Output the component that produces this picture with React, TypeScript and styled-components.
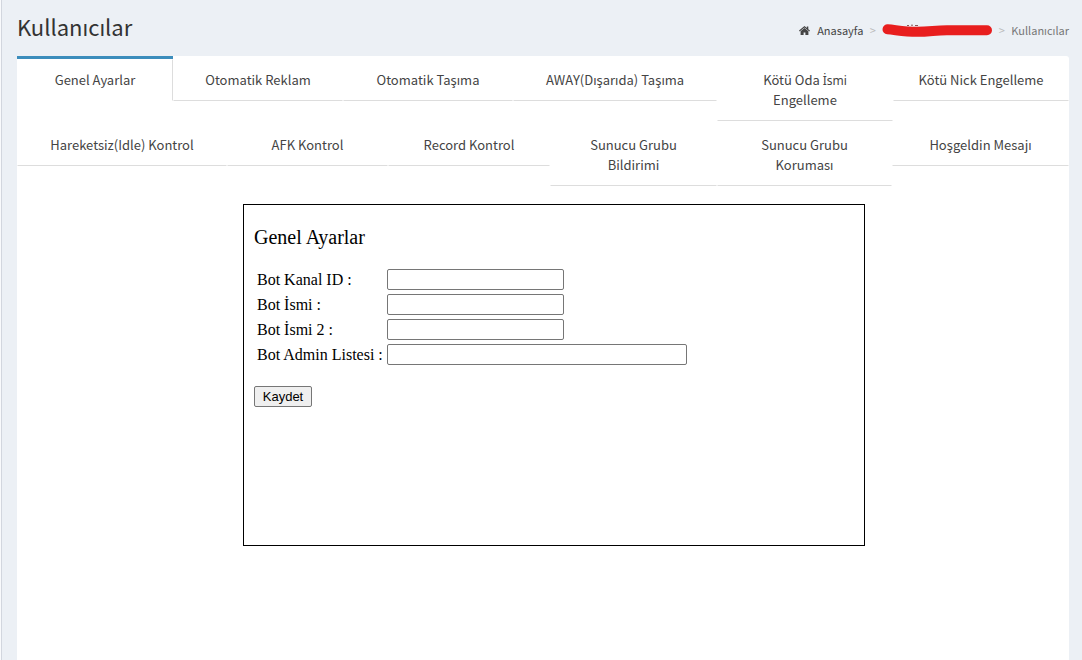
import React from "react";
import styled, { createGlobalStyle } from "styled-components";

const sans = `"Noto Sans CJK SC", "Noto Sans", sans-serif`;

const GlobalStyle = createGlobalStyle`
  *, *::before, *::after { box-sizing: border-box; }
  body { margin: 0; background: #ecf0f5; }
`;

const Page = styled.div`
  display: flex;
  flex-direction: column;
  min-height: 100vh;
  padding: 0 13px 0 15px;
  border-left: 1px solid #d2d6de;
  margin-left: 1px;
  box-shadow: -1px 0 0 #f9fafc;
  background: #ecf0f5;
  color: #333;
  font-family: ${sans};
`;

const PageHeader = styled.header`
  display: flex;
  align-items: center;
  justify-content: space-between;
  height: 56px;
`;

const Title = styled.h1`
  margin: 0;
  padding-bottom: 4px;
  font-size: 22px;
  line-height: 26px;
  font-weight: 400;
`;

const Breadcrumb = styled.ol`
  display: flex;
  align-items: center;
  margin: 0;
  padding: 4px 0 0;
  list-style: none;
  font-size: 11px;
  line-height: 18px;
  color: #777;
`;

const Crumb = styled.li`
  display: flex;
  align-items: center;

  & + &::before {
    content: ">";
    width: 19px;
    text-align: center;
    color: #bbb;
  }
`;

const CrumbLink = styled.a`
  display: flex;
  align-items: center;
  gap: 7px;
  color: #444;
  text-decoration: none;
`;

const Panel = styled.main`
  flex: 1;
  background: #fff;
  border-radius: 3px 3px 0 0;
`;

const TabRow = styled.ul`
  display: flex;
  align-items: flex-start;
  margin: 0;
  padding: 0;
  list-style: none;
`;

const Tab = styled.li<{ $grow: number; $active?: boolean }>`
  flex: ${(p) => p.$grow} 1 0;
  min-width: 0;
  border-top: 3px solid ${(p) => (p.$active ? "#3c8dbc" : "transparent")};
`;

const TabLink = styled.a<{ $active?: boolean }>`
  display: block;
  padding: 10px 15px;
  border: 1px solid transparent;
  border-right-color: ${(p) => (p.$active ? "#ddd" : "transparent")};
  border-bottom-color: ${(p) => (p.$active ? "#fff" : "#ddd")};
  border-radius: ${(p) => (p.$active ? "0" : "4px 4px 0 0")};
  color: #444;
  font-size: 13px;
  line-height: 20px;
  text-align: center;
  text-decoration: none;
`;

const DottedWord = styled.span`
  font-family: "Noto Sans", sans-serif;
  font-size: 12px;
  line-height: 1;
`;

const Content = styled.div`
  display: flex;
  justify-content: center;
  padding: 18px 0 18px 22px;
`;

const SettingsForm = styled.form`
  width: 622px;
  max-width: 100%;
  min-height: 342px;
  padding: 20px 10px;
  border: 1px solid #000;
  color: #000;
  font-family: "Liberation Serif", serif;
  font-size: 16px;
  line-height: 18px;
`;

const FormTitle = styled.h2`
  margin: 0 0 20px;
  font-size: 20px;
  line-height: 24px;
  font-weight: 400;
`;

const Field = styled.div`
  display: grid;
  grid-template-columns: 130px 1fr;
  align-items: center;
  height: 21px;
  margin: 0 3px 4px;
`;

const FieldInput = styled.input<{ $wide?: boolean }>`
  width: ${(p) => (p.$wide ? 300 : 177)}px;
  height: 21px;
  padding: 1px 2px;
  border: 1px solid #767676;
  border-radius: 2px;
  background: #fff;
  font: 13px "Liberation Sans", sans-serif;
`;

const SaveButton = styled.button`
  width: 58px;
  height: 21px;
  margin-top: 17px;
  padding: 0;
  border: 1px solid #767676;
  border-radius: 2px;
  background: #efefef;
  color: #000;
  font: 13px "Liberation Sans", sans-serif;
`;

type TabItem = {
  id: string;
  label: React.ReactNode;
  grow: number;
  active?: boolean;
};

const tabRows: TabItem[][] = [
  [
    { id: "genel", label: "Genel Ayarlar", grow: 156, active: true },
    { id: "reklam", label: "Otomatik Reklam", grow: 170 },
    { id: "tasima", label: "Otomatik Taşıma", grow: 170 },
    { id: "away", label: "AWAY(Dışarıda) Taşıma", grow: 204 },
    {
      id: "oda",
      label: (
        <>
          Kötü Oda <DottedWord>İsmi</DottedWord> Engelleme
        </>
      ),
      grow: 176,
    },
    { id: "nick", label: "Kötü Nick Engelleme", grow: 176 },
  ],
  [
    { id: "idle", label: "Hareketsiz(Idle) Kontrol", grow: 210 },
    { id: "afk", label: "AFK Kontrol", grow: 161 },
    { id: "record", label: "Record Kontrol", grow: 162 },
    { id: "bildirim", label: "Sunucu Grubu Bildirimi", grow: 167 },
    { id: "koruma", label: "Sunucu Grubu Koruması", grow: 175 },
    { id: "hosgeldin", label: "Hoşgeldin Mesajı", grow: 177 },
  ],
];

const fields = [
  { id: "bot-kanal", label: "Bot Kanal ID :" },
  { id: "bot-isim", label: "Bot İsmi :" },
  { id: "bot-isim-2", label: "Bot İsmi 2 :" },
  { id: "bot-admin", label: "Bot Admin Listesi :", wide: true },
];

export default function App() {
  return (
    <>
      <GlobalStyle />
      <Page>
        <PageHeader>
          <Title>Kullanıcılar</Title>
          <nav>
            <Breadcrumb>
              <Crumb>
                <CrumbLink href="#">
                  <svg width="11" height="9" viewBox="0 0 11 9" fill="#444">
                    <path d="M5.5 0 0 4.6l.7.8 4.8-4 4.8 4 .7-.8-1.7-1.4V.6H7.8v1.3z" />
                    <path d="M5.5 2.1 1.6 5.3V9h3V6.4h1.8V9h3V5.3z" />
                  </svg>
                  Anasayfa
                </CrumbLink>
              </Crumb>
              <Crumb>
                <svg width="110" height="14" viewBox="0 0 110 14" fill="none">
                  <path
                    d="M25 2.500h2M29 2.200h2M33 2.500h3"
                    stroke="#8a5a5a"
                    strokeWidth="1"
                  />
                  <path
                    d="M5.500 6.300C14 7 22 8.800 35 8.800S53 7.200 65 7.200H105"
                    stroke="#e81e1e"
                    strokeWidth="10"
                    strokeLinecap="round"
                    strokeLinejoin="round"
                  />
                </svg>
              </Crumb>
              <Crumb>Kullanıcılar</Crumb>
            </Breadcrumb>
          </nav>
        </PageHeader>
        <Panel>
          <nav>
            {tabRows.map((row, i) => (
              <TabRow key={i}>
                {row.map((tab) => (
                  <Tab key={tab.id} $grow={tab.grow} $active={tab.active}>
                    <TabLink href="#" $active={tab.active}>
                      {tab.label}
                    </TabLink>
                  </Tab>
                ))}
              </TabRow>
            ))}
          </nav>
          <Content>
            <SettingsForm onSubmit={(e) => e.preventDefault()}>
              <FormTitle>Genel Ayarlar</FormTitle>
              {fields.map((f) => (
                <Field key={f.id}>
                  <label htmlFor={f.id}>{f.label}</label>
                  <FieldInput id={f.id} type="text" $wide={f.wide} />
                </Field>
              ))}
              <SaveButton type="submit">Kaydet</SaveButton>
            </SettingsForm>
          </Content>
        </Panel>
      </Page>
    </>
  );
}
